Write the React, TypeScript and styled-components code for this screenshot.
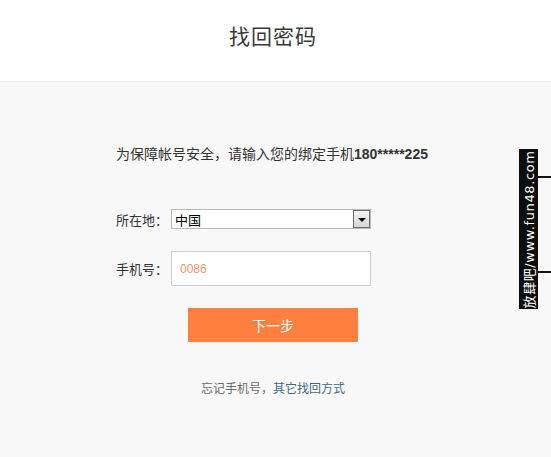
import React from "react";
import styled, { createGlobalStyle } from "styled-components";

const GlobalStyle = createGlobalStyle`
  html, body {
    margin: 0;
    padding: 0;
    background: #f8f8f8;
  }
  body {
    font-family: "Liberation Sans", "Noto Sans CJK SC", sans-serif;
    color: #333;
  }
`;

const Page = styled.div`
  position: relative;
  width: 551px;
  height: 457px;
  overflow: hidden;
  background: #f8f8f8;
`;

const Header = styled.header`
  height: 81px;
  background: #fff;
  border-bottom: 1px solid #ececec;
  display: flex;
  align-items: center;
  justify-content: center;
  padding-right: 5px;
`;

const Title = styled.h1`
  margin: 0;
  font-family: "Noto Sans CJK SC", sans-serif;
  font-weight: 400;
  font-size: 21px;
  letter-spacing: 1px;
  color: #3a3a3a;
  transform: translateY(-6px);
`;

const Body = styled.main`
  display: flex;
  flex-direction: column;
  align-items: center;
  padding-top: 61px;
  padding-right: 5px;
`;

const Notice = styled.p`
  margin: 0;
  width: 314px;
  height: 20px;
  line-height: 20px;
  font-family: "Noto Sans CJK SC", sans-serif;
  font-size: 14px;
  color: #333;
  white-space: nowrap;
`;

const Phone = styled.b`
  font-family: "Liberation Sans", sans-serif;
  font-size: 14px;
  font-weight: 700;
`;

const Form = styled.div`
  width: 314px;
  display: flex;
  flex-direction: column;
`;

const Row = styled.div<{ $top: number }>`
  display: flex;
  align-items: center;
  margin-top: ${(p) => p.$top}px;
`;

const Label = styled.span`
  width: 55px;
  font-family: "Noto Sans CJK SC", sans-serif;
  font-size: 13px;
  color: #333;
`;

const Select = styled.div`
  box-sizing: border-box;
  width: 200px;
  height: 20px;
  border: 1px solid #b8b8b8;
  background: #fff;
  display: flex;
  align-items: center;
  justify-content: space-between;
  font-family: "Noto Sans CJK SC", sans-serif;
  font-size: 13px;
  color: #000;
  padding-left: 3px;
`;

const Arrow = styled.span`
  box-sizing: border-box;
  width: 17px;
  height: 18px;
  border: 1px solid #6f6f6f;
  background: linear-gradient(#f4f4f4, #d6d6d6);
  display: flex;
  align-items: center;
  justify-content: center;

  &::after {
    content: "";
    border-left: 4px solid transparent;
    border-right: 4px solid transparent;
    border-top: 4px solid #000;
    margin-top: 1px;
  }
`;

const Input = styled.input`
  box-sizing: border-box;
  width: 200px;
  height: 35px;
  border: 1px solid #cfcfcf;
  background: #fff;
  padding: 0 8px;
  font-family: "Liberation Sans", sans-serif;
  font-size: 12px;
  outline: none;

  &::placeholder {
    color: #e59a6c;
  }
`;

const Button = styled.button`
  margin-top: 22px;
  width: 170px;
  height: 34px;
  border: none;
  background: #fe7f3e;
  color: #fff;
  font-family: "Noto Sans CJK SC", sans-serif;
  font-size: 14px;
  cursor: pointer;
`;

const Footer = styled.p`
  margin: 38px 0 0;
  line-height: 16px;
  font-family: "Noto Sans CJK SC", sans-serif;
  font-size: 12px;
  color: #6b6b6b;
`;

const Link = styled.a`
  color: #3f6a85;
  text-decoration: none;
`;

const Watermark = styled.div`
  position: absolute;
  left: 519px;
  top: 149px;
  width: 19px;
  height: 160px;
  background: #0d0d0d;
  display: flex;
  align-items: center;
  justify-content: center;
`;

const MarkText = styled.span`
  transform: rotate(-90deg);
  white-space: nowrap;
  color: #fff;
  font-family: "DejaVu Sans", "Noto Sans CJK SC", sans-serif;
  font-size: 13px;
  letter-spacing: 0.6px;
`;

const Tick = styled.span<{ $top: number }>`
  position: absolute;
  left: 538px;
  top: ${(p) => p.$top}px;
  width: 13px;
  height: 2px;
  background: #111;
`;

export default function App() {
  return (
    <Page>
      <GlobalStyle />
      <Header>
        <Title>找回密码</Title>
      </Header>
      <Body>
        <Notice>
          为保障帐号安全，请输入您的绑定手机<Phone>180*****225</Phone>
        </Notice>
        <Form>
          <Row $top={46}>
            <Label>所在地：</Label>
            <Select>
              中国
              <Arrow />
            </Select>
          </Row>
          <Row $top={22}>
            <Label>手机号：</Label>
            <Input placeholder="0086" />
          </Row>
        </Form>
        <Button>下一步</Button>
        <Footer>
          忘记手机号，<Link href="#">其它找回方式</Link>
        </Footer>
      </Body>
      <Watermark>
        <MarkText>放肆吧/www.fun48.com</MarkText>
      </Watermark>
      <Tick $top={176} />
      <Tick $top={271} />
    </Page>
  );
}
